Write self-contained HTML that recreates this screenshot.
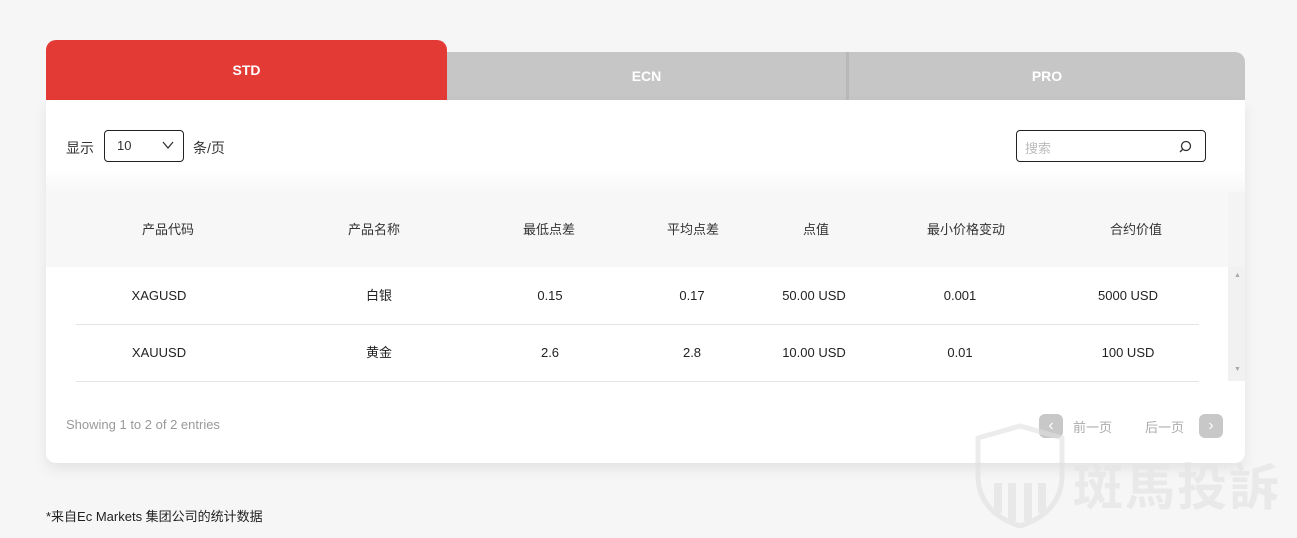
<!DOCTYPE html>
<html><head><meta charset="utf-8"><style>
body{margin:0;width:1297px;height:538px;background:#f6f6f6;font-family:"Liberation Sans","Noto Sans CJK SC",sans-serif;position:relative;overflow:hidden;color:#333}
.abs{position:absolute}
.tab{position:absolute;display:flex;align-items:center;justify-content:center;font-weight:bold;font-size:14px;color:#fff}
.card{position:absolute;left:46px;top:100px;width:1199px;height:363px;background:#fff;border-radius:0 0 10px 10px;box-shadow:0 6px 14px rgba(0,0,0,.08)}
.c{position:absolute;transform:translateX(-50%);white-space:nowrap;font-size:13px;line-height:16px;height:16px}
.r{color:#222}
</style></head><body>
<div class="tab" style="left:447px;top:52px;width:399px;height:48px;background:#c6c6c6">ECN</div>
<div class="tab" style="left:846px;top:52px;width:399px;height:48px;background:#c6c6c6;border-radius:0 10px 0 0;border-left:3px solid #b8b8b8;box-sizing:border-box">PRO</div>
<div class="tab" style="left:46px;top:40px;width:401px;height:60px;background:#e43a36;border-radius:10px 10px 0 0">STD</div>
<div class="card">
 <div class="abs" style="left:20px;top:38px;font-size:14px">显示</div>
 <div class="abs" style="left:58px;top:30px;border:1px solid #222;border-radius:4px;font-size:13px;line-height:30px;padding-left:12px;box-sizing:border-box;width:80px;height:32px">10
  <svg class="abs" style="left:57px;top:10px" width="12" height="9"><path d="M1 1L6 7L11 1" fill="none" stroke="#333" stroke-width="1.3"/></svg></div>
 <div class="abs" style="left:147px;top:38px;font-size:14px">条/页</div>
 <div class="abs" style="left:970px;top:30px;width:190px;height:32px;border:1px solid #222;border-radius:4px;box-sizing:border-box">
  <span class="abs" style="left:8px;top:7px;font-size:13px;color:#bbb">搜索</span>
  <svg class="abs" style="left:160px;top:8px" width="16" height="16"><circle cx="9" cy="7" r="4.5" fill="none" stroke="#333" stroke-width="1.3"/><path d="M6 10L3 13" stroke="#333" stroke-width="1.3"/></svg></div>
 <div class="abs" style="left:0;top:70px;width:1199px;height:22px;background:linear-gradient(#fff,#f7f7f7)"></div>
 <div class="abs" style="left:0;top:92px;width:1182px;height:75px;background:#f7f7f7"></div>
 <div class="abs" style="left:1182px;top:92px;width:17px;height:75px;background:#f4f4f4"></div>
 <div class="abs" style="left:1182px;top:167px;width:17px;height:114px;background:#f1f1f1"></div>
 <div class="abs" style="left:1188px;top:172px;font-size:7px;color:#aaa">▲</div>
 <div class="abs" style="left:1188px;top:266px;font-size:7px;color:#aaa">▼</div>
 <div class="abs" style="left:30px;top:224px;width:1123px;height:1px;background:#e4e4e4"></div>
 <div class="abs" style="left:30px;top:281px;width:1123px;height:1px;background:#e4e4e4"></div>
 <div class="c" style="left:122px;top:122px">产品代码</div>
 <div class="c" style="left:328px;top:122px">产品名称</div>
 <div class="c" style="left:503px;top:122px">最低点差</div>
 <div class="c" style="left:647px;top:122px">平均点差</div>
 <div class="c" style="left:770px;top:122px">点值</div>
 <div class="c" style="left:920px;top:122px">最小价格变动</div>
 <div class="c" style="left:1090px;top:122px">合约价值</div>
 <div class="c r" style="left:113px;top:188px">XAGUSD</div><div class="c r" style="left:333px;top:188px">白银</div><div class="c r" style="left:504px;top:188px">0.15</div><div class="c r" style="left:646px;top:188px">0.17</div><div class="c r" style="left:768px;top:188px">50.00 USD</div><div class="c r" style="left:914px;top:188px">0.001</div><div class="c r" style="left:1082px;top:188px">5000 USD</div>
 <div class="c r" style="left:113px;top:245px">XAUUSD</div><div class="c r" style="left:333px;top:245px">黄金</div><div class="c r" style="left:504px;top:245px">2.6</div><div class="c r" style="left:646px;top:245px">2.8</div><div class="c r" style="left:768px;top:245px">10.00 USD</div><div class="c r" style="left:914px;top:245px">0.01</div><div class="c r" style="left:1082px;top:245px">100 USD</div>
 <div class="abs" style="left:20px;top:317px;font-size:13px;color:#999">Showing 1 to 2 of 2 entries</div>
 <div class="abs" style="left:993px;top:314px;width:24px;height:24px;border-radius:6px;background:#c8c8c8;color:#fff;text-align:center;line-height:24px;font-size:16px">‹</div>
 <div class="abs" style="left:1027px;top:317px;font-size:13px;color:#aaa">前一页</div>
 <div class="abs" style="left:1099px;top:317px;font-size:13px;color:#aaa">后一页</div>
 <div class="abs" style="left:1153px;top:314px;width:24px;height:24px;border-radius:6px;background:#c8c8c8;color:#fff;text-align:center;line-height:24px;font-size:16px">›</div>
</div>
<svg class="abs" style="left:972px;top:423px;opacity:.6" width="96" height="105"><path d="M48 3L90 15V55Q88 90 48 103Q8 90 6 55V15Z" fill="none" stroke="#e0e0e0" stroke-width="5"/><path d="M26 60V90M40 60V98M56 60V98M70 60V90" stroke="#e0e0e0" stroke-width="8"/></svg>
<div class="abs" style="left:1073px;top:448px;font-size:50px;color:#e6e6e6;font-weight:bold;letter-spacing:2px;opacity:.8">斑馬投訴</div>
<div class="abs" style="left:46px;top:506px;font-size:13px;color:#222">*来自Ec Markets 集团公司的统计数据</div>
</body></html>
